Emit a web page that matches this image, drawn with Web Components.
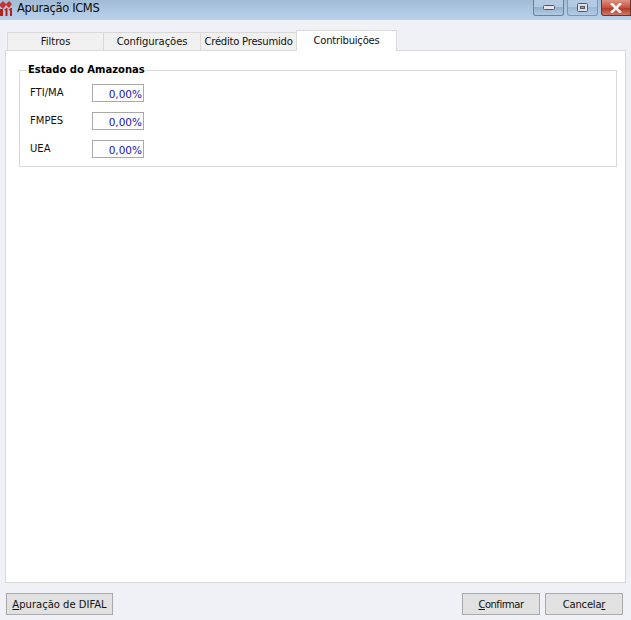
<!DOCTYPE html>
<html lang="pt-BR">
<head>
<meta charset="utf-8">
<title>Apuração ICMS</title>
<style>
  html, body { margin: 0; height: 100%; overflow: hidden; }
  body { background: #f0f0f7; font: 11px "DejaVu Sans", sans-serif; color: #111; }
</style>
</head>
<body>
<app-window>
  <title-bar slot="top" caption="Apuração ICMS"></title-bar>
  <tab-strip slot="top">
    <tab-item style="width:97px">Filtros</tab-item>
    <tab-item style="width:97px;letter-spacing:-.07px">Configurações</tab-item>
    <tab-item style="width:96px;letter-spacing:-.22px">Crédito Presumido</tab-item>
    <tab-item active style="width:101px;letter-spacing:-.2px">Contribuições</tab-item>
  </tab-strip>
  <group-box caption="Estado do Amazonas">
    <percent-row label="FTI/MA" value="0,00%"></percent-row>
    <percent-row label="FMPES" value="0,00%"></percent-row>
    <percent-row label="UEA" value="0,00%"></percent-row>
  </group-box>
  <win-button slot="left" style="width:107px" text="Apuração de DIFAL" key="A"></win-button>
  <win-button slot="right" style="width:78px;letter-spacing:-.5px" text="Confirmar" key="C"></win-button>
  <win-button slot="right" style="width:78px;letter-spacing:-.2px" text="Cancelar" key="r"></win-button>
</app-window>

<script>
const sans = `"DejaVu Sans", sans-serif`

class AppWindow extends HTMLElement {
  constructor() {
    super()
    this.attachShadow({ mode: "open" }).innerHTML = `
      <style>
        :host { display: flex; flex-direction: column; height: 620px; width: 631px; background: #f0f0f7; }
        .panel { flex: 1; margin: 0 5px; background: #fff; border: 1px solid #d9d9d9; padding: 12px 8px 0 13px; min-height: 0; }
        .footer { display: flex; justify-content: space-between; padding: 10px 8px 5px 6px; height: 22px; }
        .right { display: flex; gap: 5px; }
      </style>
      <slot name="top"></slot>
      <div class="panel"><slot></slot></div>
      <div class="footer">
        <slot name="left"></slot>
        <div class="right"><slot name="right"></slot></div>
      </div>`
  }
}
customElements.define('app-window', AppWindow)

class TitleBar extends HTMLElement {
  constructor() {
    super()
    this.attachShadow({ mode: "open" }).innerHTML = `
      <style>
        :host { display: flex; align-items: flex-start; height: 20px; background: linear-gradient(#a3bcd6, #b9d1ea); }
        svg.logo { flex: none; margin-top: 1px; }
        .cap { flex: 1; font: 11.5px/16px ${sans}; color: #0b0b0b; padding: 0 0 0 5px; letter-spacing: -0.35px; }
        .btn { flex: none; height: 16px; margin-right: 3px; box-sizing: border-box; border: 1px solid #6d809b; border-top: 0; border-radius: 0 0 3px 3px; display: flex; align-items: center; justify-content: center; }
        .min { width: 31px; background: linear-gradient(#b4cae3 0 50%, #94b0cf 50%, #b3cbe4); }
        .max { width: 31px; background: linear-gradient(#b4cae3 0 50%, #9db8d6 50%, #b3cbe4); border-color: #7f97b5; }
        .close { width: 30px; margin-right: 0; background: linear-gradient(#dc9384, #c8523c 50%, #b23a24 55%, #cf7766); border-color: #5d3a3a; border-radius: 0 0 0 3px; }
      </style>
      <svg class="logo" width="12" height="16" viewBox="0 0 12 16">
        <path d="M0 3 L3 0 L6 3 L9 0 L12 3 L9 7 L6 4 L3 8 L0 5 Z" fill="#c9302a"/>
        <path d="M0 8 H3 V15 H0 Z" fill="#b8211c"/>
        <path d="M4 9 L6.5 7 H7.5 V15 H5.5 V9.5 Z M8.5 9 L10.5 7 H12 V15 H10 V9.5 Z" fill="#b8211c"/>
      </svg>
      <div class="cap">${this.getAttribute('caption')}</div>
      <div class="btn min">
        <svg width="12" height="6"><rect x=".5" y=".5" width="11" height="4" rx="1" fill="#e6e6e6" stroke="#4e5a6c"/></svg>
      </div>
      <div class="btn max">
        <svg width="12" height="10"><rect x=".5" y=".5" width="10" height="8" rx="1" fill="#dcdfe6" stroke="#4e5a6c"/><rect x="3.5" y="3.5" width="4" height="2" fill="#8ba3c0" stroke="#4e5a6c"/></svg>
      </div>
      <div class="btn close">
        <svg width="12" height="10" viewBox="0 0 12 10"><path d="M2 1 L10 9 M10 1 L2 9" stroke="#f2f2f2" stroke-width="2.6" stroke-linecap="square"/></svg>
      </div>`
  }
}
customElements.define('title-bar', TitleBar)

class TabStrip extends HTMLElement {
  constructor() {
    super()
    this.attachShadow({ mode: "open" }).innerHTML = `
      <style>
        :host { display: flex; align-items: flex-end; height: 30px; padding-left: 7px; }
      </style>
      <slot></slot>`
  }
}
customElements.define('tab-strip', TabStrip)

class TabItem extends HTMLElement {
  constructor() {
    super()
    this.attachShadow({ mode: "open" }).innerHTML = `
      <style>
        :host { display: block; box-sizing: border-box; height: 18px; background: #f0f0f0; border: 1px solid #d9d9d9; border-bottom: 0; font: 10px/18px ${sans}; text-align: center; color: #111; white-space: nowrap; overflow: hidden; }
        :host(:not(:first-child)) { border-left: 0; }
        :host([active]) { height: 21px; margin-bottom: -1px; margin-left: -1px; border-left: 1px solid #d9d9d9; position: relative; background: #fff; line-height: 19px; }
      </style>
      <slot></slot>`
  }
}
customElements.define('tab-item', TabItem)

class GroupBox extends HTMLElement {
  constructor() {
    super()
    this.attachShadow({ mode: "open" }).innerHTML = `
      <style>
        :host { display: block; }
        fieldset { margin: 0; border: 1px solid #d9d9d9; padding: 7px 0 7px 10px; height: 88px; }
        legend { font: bold 10px/14px ${sans}; padding: 0 1px; margin-left: -3px; color: #000; }
        .rows { display: flex; flex-direction: column; gap: 10px; }
      </style>
      <fieldset>
        <legend>${this.getAttribute('caption')}</legend>
        <div class="rows"><slot></slot></div>
      </fieldset>`
  }
}
customElements.define('group-box', GroupBox)

class PercentRow extends HTMLElement {
  constructor() {
    super()
    this.attachShadow({ mode: "open" }).innerHTML = `
      <style>
        :host { display: flex; height: 18px; }
        .lbl { width: 62px; font: 10px/15px ${sans}; color: #111; padding-top: 1px; }
        .val { box-sizing: border-box; width: 52px; height: 18px; border: 1px solid #a9a9a9; background: #fff; color: #1414b4; font: 10.5px/18px ${sans}; text-align: right; padding-right: 1px; }
      </style>
      <div class="lbl">${this.getAttribute('label')}</div>
      <div class="val">${this.getAttribute('value')}</div>`
  }
}
customElements.define('percent-row', PercentRow)

class WinButton extends HTMLElement {
  constructor() {
    super()
    const text = this.getAttribute('text')
    const i = text.indexOf(this.getAttribute('key'))
    const html = text.slice(0, i) + '<u>' + text[i] + '</u>' + text.slice(i + 1)
    this.attachShadow({ mode: "open" }).innerHTML = `
      <style>
        :host { display: block; box-sizing: border-box; height: 22px; border: 1px solid #a9a9a9; background: #e1e1e1; font: 10px/21px ${sans}; text-align: center; color: #111; white-space: nowrap; }
      </style>
      ${html}`
  }
}
customElements.define('win-button', WinButton)
</script>
</body>
</html>
